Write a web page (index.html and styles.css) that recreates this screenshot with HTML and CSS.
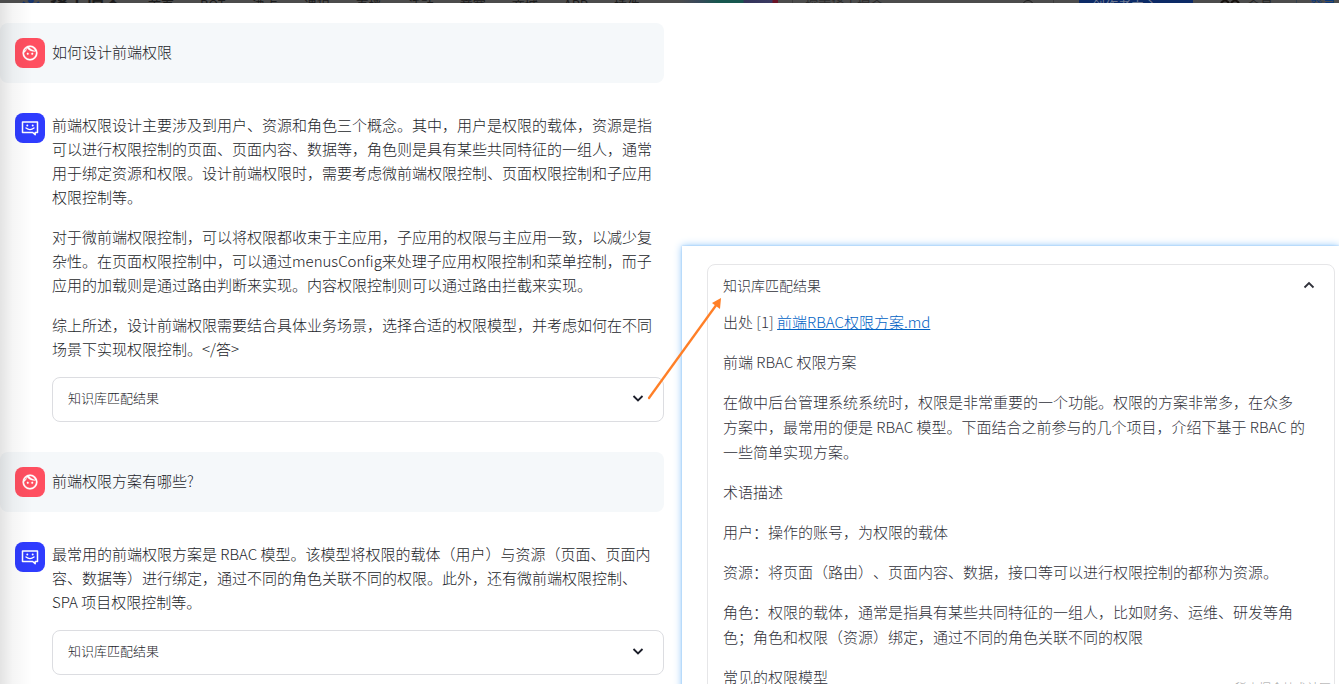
FILE: index.html
```html
<!DOCTYPE html>
<html lang="zh-CN">
<head>
<meta charset="utf-8">
<meta name="viewport" content="width=device-width, initial-scale=1">
<title>知识库问答</title>
<link rel="stylesheet" href="styles.css">
</head>
<body>
<svg class="defs" aria-hidden="true">
  <symbol id="face" viewBox="0 0 24 24"><path d="M10.25 13a1.25 1.25 0 1 1-2.5 0 1.25 1.25 0 0 1 2.5 0zM15 11.75a1.25 1.25 0 1 0 0 2.5 1.25 1.25 0 0 0 0-2.5zM22 12a10 10 0 1 1-20 0 10 10 0 0 1 20 0zM10.660 4.120A9.950 9.950 0 0 0 17.500 9c.460 0 .910-.040 1.340-.100A8 8 0 0 0 12 4c-.460 0-.910.050-1.340.120zM4.420 9.470a8.040 8.040 0 0 0 3.660-4.440 8.040 8.040 0 0 0-3.660 4.440zM20 12c0-.780-.120-1.530-.330-2.240-.700.150-1.420.240-2.170.240a11.950 11.950 0 0 1-9.190-4.300A11.980 11.980 0 0 1 4.010 11.860L4 12a8 8 0 0 0 16 0z" fill="#fff" stroke="#fff" stroke-width=".3" fill-rule="evenodd"/></symbol>
  <symbol id="bot" viewBox="0 0 18 18"><path d="M1.500 3h15v10.500h-2.300v2.300l-2.500-2.300H1.500z" fill="none" stroke="#fff" stroke-width="1.500" stroke-linejoin="round"/><circle cx="6.300" cy="6.500" r="1" fill="#fff"/><circle cx="11.700" cy="6.500" r="1" fill="#fff"/><path d="M5 9q4 3.300 8 0" fill="none" stroke="#fff" stroke-width="1.300" stroke-linecap="round"/></symbol>
  <symbol id="down" viewBox="0 0 12 12"><path d="M1.500 4 6 8.500 10.500 4" fill="none" stroke="currentColor" stroke-width="1.800"/></symbol>
  <symbol id="up" viewBox="0 0 12 12"><path d="M1.500 8.500 6 4l4.500 4.500" fill="none" stroke="currentColor" stroke-width="1.800"/></symbol>
</svg>

<header class="topbar">
  <div class="brand">
    <svg class="brand-mark" viewBox="0 0 18 12" aria-hidden="true"><path d="M7 1l2-2 2 2-2 2zM1 2l8 7 8-7" fill="none" stroke="#15336e" stroke-width="2"/></svg>
    <span>稀土掘金</span>
  </div>
  <nav class="menu">
    <span>首页</span><span>BOT</span><span>沸点</span><span>课程</span><span>直播</span><span>活动</span><span>竞赛</span><span>商城</span><span>APP</span><span>插件</span>
  </nav>
  <div class="promo"></div>
  <div class="search"><span>探索稀土掘金</span><svg class="lens" viewBox="0 0 14 14" aria-hidden="true"><circle cx="7" cy="6" r="5.500" fill="none" stroke="#222"/></svg></div>
  <div class="creator">创作者中心</div>
  <div class="member"><svg class="vip" viewBox="0 0 20 8" aria-hidden="true"><path d="M1 3q4-5 8 0M11 3q4-5 8 0" fill="none" stroke="#17120f" stroke-width="2"/></svg><span>会员</span></div>
  <div class="login">登录</div>
</header>

<main class="board">
  <section class="chat">
    <article class="message user">
      <span class="avatar"><svg viewBox="0 0 24 24" aria-hidden="true"><use href="#face"/></svg></span>
      <div class="content"><p class="question">如何设计前端权限</p></div>
    </article>
    <article class="message">
      <span class="avatar robot"><svg viewBox="0 0 18 18" aria-hidden="true"><use href="#bot"/></svg></span>
      <div class="content">
        <p>前端权限设计主要涉及到用户、资源和角色三个概念。其中，用户是权限的载体，资源是指<br>可以进行权限控制的页面、页面内容、数据等，角色则是具有某些共同特征的一组人，通常<br>用于绑定资源和权限。设计前端权限时，需要考虑微前端权限控制、页面权限控制和子应用<br>权限控制等。</p>
        <p>对于微前端权限控制，可以将权限都收束于主应用，子应用的权限与主应用一致，以减少复<br>杂性。在页面权限控制中，可以通过menusConfig来处理子应用权限控制和菜单控制，而子<br>应用的加载则是通过路由判断来实现。内容权限控制则可以通过路由拦截来实现。</p>
        <p>综上所述，设计前端权限需要结合具体业务场景，选择合适的权限模型，并考虑如何在不同<br>场景下实现权限控制。&lt;/答&gt;</p>
        <details class="expander"><summary>知识库匹配结果<svg class="chevron" aria-hidden="true"><use href="#down"/></svg></summary></details>
      </div>
    </article>
    <article class="message user">
      <span class="avatar"><svg viewBox="0 0 24 24" aria-hidden="true"><use href="#face"/></svg></span>
      <div class="content"><p class="question">前端权限方案有哪些?</p></div>
    </article>
    <article class="message">
      <span class="avatar robot"><svg viewBox="0 0 18 18" aria-hidden="true"><use href="#bot"/></svg></span>
      <div class="content">
        <p>最常用的前端权限方案是 RBAC 模型。该模型将权限的载体（用户）与资源（页面、页面内<br>容、数据等）进行绑定，通过不同的角色关联不同的权限。此外，还有微前端权限控制、<br>SPA 项目权限控制等。</p>
        <details class="expander"><summary>知识库匹配结果<svg class="chevron" aria-hidden="true"><use href="#down"/></svg></summary></details>
      </div>
    </article>
  </section>

  <aside class="panel">
    <details class="expander result" open>
      <summary>知识库匹配结果<svg class="chevron" aria-hidden="true"><use href="#up"/></svg></summary>
      <div class="source">
        <p>出处 [1] <a href="#">前端RBAC权限方案.md</a></p>
        <p>前端 RBAC 权限方案</p>
        <p>在做中后台管理系统系统时，权限是非常重要的一个功能。权限的方案非常多，在众多<br>方案中，最常用的便是 RBAC 模型。下面结合之前参与的几个项目，介绍下基于 RBAC 的<br>一些简单实现方案。</p>
        <p>术语描述</p>
        <p>用户：操作的账号，为权限的载体</p>
        <p>资源：将页面（路由）、页面内容、数据，接口等可以进行权限控制的都称为资源。</p>
        <p>角色：权限的载体，通常是指具有某些共同特征的一组人，比如财务、运维、研发等角<br>色；角色和权限（资源）绑定，通过不同的角色关联不同的权限</p>
        <p>常见的权限模型</p>
      </div>
    </details>
  </aside>

  <svg class="arrow" viewBox="0 0 80 108" aria-hidden="true"><path d="M4 106 72 12" stroke="#ff7f27" stroke-width="2.300" stroke-linecap="round"/><path d="M76 6 75 17 67 11z" fill="#ff7f27"/></svg>
  <span class="watermark">@稀土掘金技术社区</span>
</main>
</body>
</html>
```

FILE: styles.css
```css
* { box-sizing: border-box; }

body {
  margin: 0;
  height: 100vh;
  overflow: hidden;
  display: flex;
  flex-direction: column;
  background: #fff;
  color: #1c1e2a;
  font: 300 15px/24px "Noto Sans CJK SC", "Noto Sans", sans-serif;
  text-spacing-trim: space-all;
}

p { margin: 0; }

.defs { position: absolute; width: 0; height: 0; }

/* Dimmed site header, only its top edge shows */
.topbar {
  flex: none;
  display: flex;
  height: 3px;
  overflow: hidden;
  padding: 0 3px 0 22px;
  background: #4c4c4c;
  color: #1c1c1c;
  font-size: 13px;
  font-weight: 400;
  line-height: 10px;
}
.brand { display: flex; gap: 10px; font-size: 18px; font-weight: 700; line-height: 14px; }
.brand-mark { width: 18px; height: 12px; }
.menu { display: flex; gap: 26px; margin-left: 26px; }
.promo {
  width: 100px;
  margin-left: 38px;
  background: linear-gradient(90deg, #4c4c4c, #39485a 20%, #17574f 40%, #17574f 65%, #34345a 66%, #3a3a62 94%, #6b1428 95%);
}
.search {
  display: flex;
  flex: 1;
  justify-content: space-between;
  margin-left: 14px;
  padding: 0 18px 0 12px;
  border: solid #3c3c3c;
  border-width: 0 1px;
  color: #2c2c2c;
}
.lens { width: 14px; height: 14px; }
.creator { width: 114px; margin-left: 25px; padding-left: 13px; background: #0c2a66; color: #6c7890; }
.member { display: flex; gap: 7px; margin-left: 27px; color: #262626; }
.vip { width: 20px; height: 8px; }
.login { margin-left: 23px; padding-left: 13px; border-left: 1px solid #334050; color: #0d3978; }

.board {
  position: relative;
  flex: 1;
  min-height: 0;
  overflow: hidden;
  display: grid;
  grid-template-columns: 664fr 657fr;
  column-gap: 18px;
}
.board::before {
  content: "";
  position: absolute;
  inset: 0 auto 0 0;
  width: 32px;
  background: linear-gradient(90deg, rgba(0, 0, 0, .11), rgba(0, 0, 0, .04) 40%, transparent);
}

.chat { display: flex; flex-direction: column; gap: 15px; padding-top: 20px; }
.message { display: flex; gap: 7px; padding: 15px 0 15px 15px; border-radius: 8px; }
.user { background: #f5f8fa; }
.avatar {
  flex: none;
  display: grid;
  place-items: center;
  width: 30px;
  height: 30px;
  border-radius: 8px;
  background: #ff4f60;
}
.avatar svg { width: 18px; height: 18px; }
.robot { background: #2f3cff; }
.content { flex: 1; min-width: 0; display: flex; flex-direction: column; gap: 16px; white-space: nowrap; }
.question { line-height: 28px; }

.expander { border: 1px solid #dcdde1; border-radius: 8px; }
.expander summary {
  display: flex;
  align-items: center;
  justify-content: space-between;
  height: 43px;
  padding: 0 19px 3px 15px;
  font-size: 13px;
  list-style: none;
  cursor: pointer;
}
.chevron { width: 12px; height: 12px; }

.panel {
  margin-top: 243px;
  padding: 18px 4px 0 25px;
  background: #fff;
  box-shadow: 0 0 8px #8cc4fa, 0 0 2px #9ccbf5;
  color: #30313a;
}
.result { border: 1px solid #e6e6e8; height: 480px; }
.result summary { font-size: 14px; }
.source {
  display: flex;
  flex-direction: column;
  gap: 15px;
  padding: 1px 12px 0 15px;
  line-height: 25px;
  white-space: nowrap;
}
.source a { color: #0062c4; }

.arrow { position: absolute; left: 645px; top: 289px; width: 80px; height: 108px; fill: none; }
.watermark { position: absolute; right: 8px; bottom: -10px; color: #a0a0a0; font-size: 12px; line-height: 12px; }
```
